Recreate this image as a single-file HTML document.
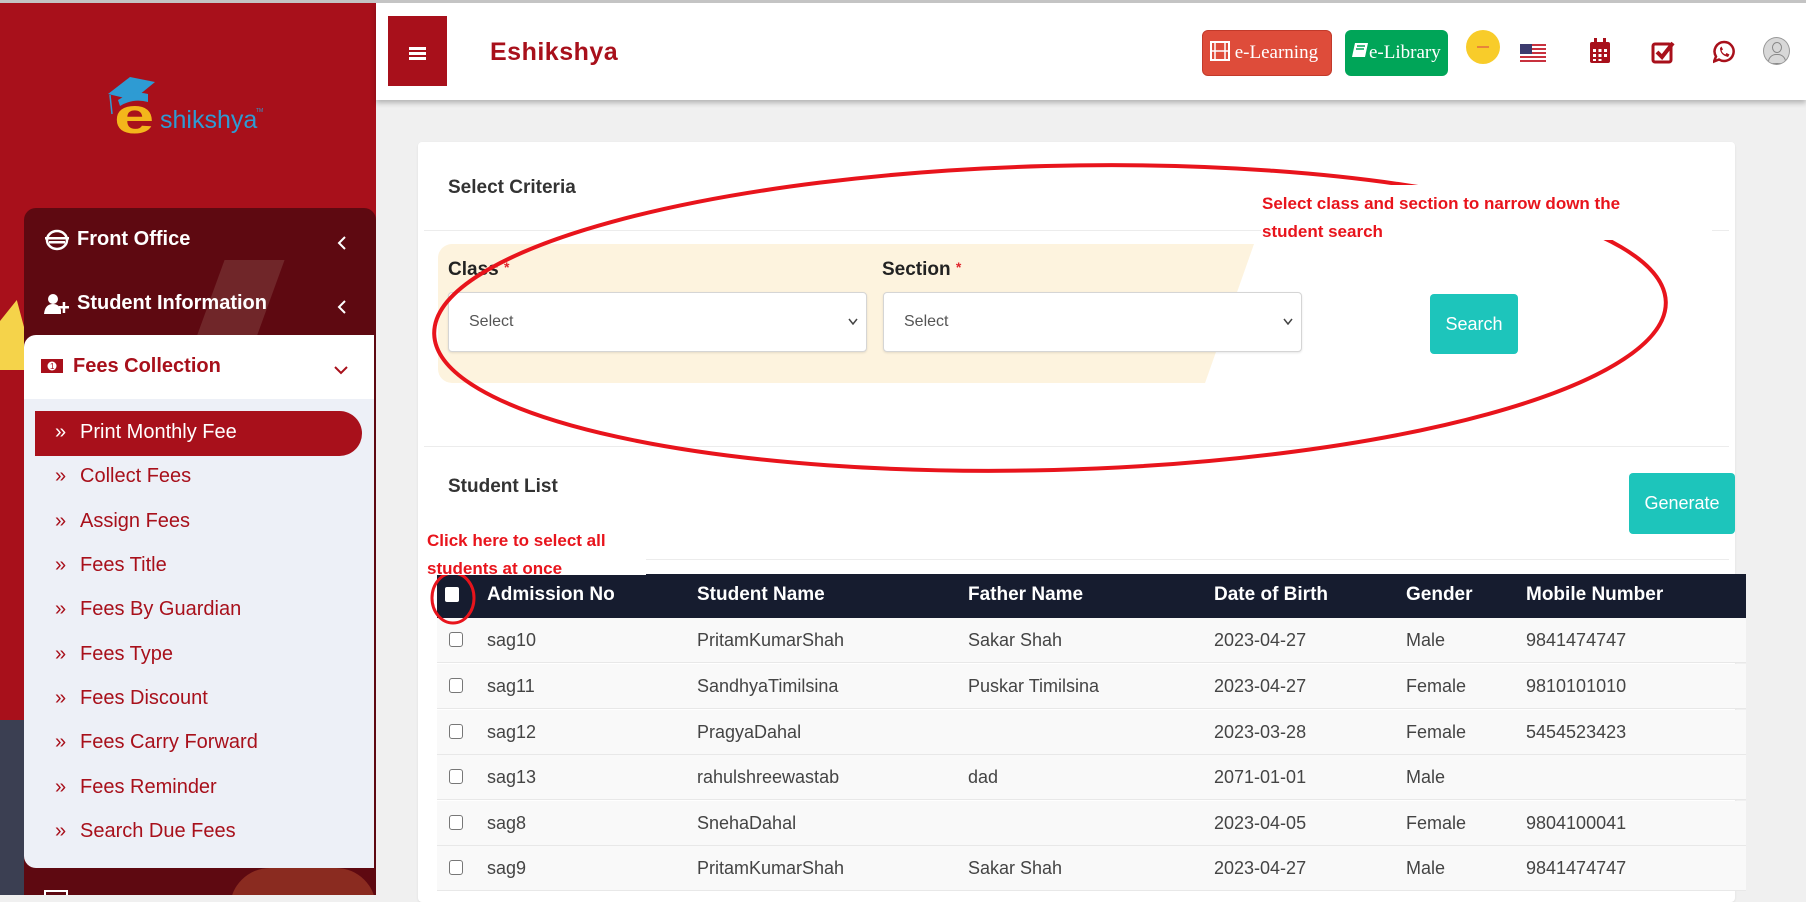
<!DOCTYPE html>
<html><head><meta charset="utf-8"><style>
*{margin:0;padding:0;box-sizing:border-box}
body{width:1806px;height:895px;overflow:hidden;background:#f0f0f0;font-family:"Liberation Sans",sans-serif;position:relative}
.a{position:absolute}
.side{left:0;top:0;width:376px;height:895px;background:#a8101b;overflow:hidden}
.mi{color:#fff;font-weight:bold;font-size:20px;white-space:nowrap}
.sub{left:55px;color:#a8101b;font-size:20px;white-space:nowrap}
.sub b{font-weight:normal;display:inline-block;width:25px;font-size:20px}
.th{color:#fff;font-weight:bold;font-size:19px;top:584px;white-space:nowrap}
.row{left:437px;width:1309px;height:45px;background:#f9f9f9;border-bottom:1px solid #e8e8e8}
.row span{position:absolute;top:12px;font-size:18px;color:#444;white-space:nowrap}
.cb{position:absolute;left:12px;top:14px;width:14px;height:15px;border:1.5px solid #777;border-radius:3px;background:#fff}
.sel{height:60px;border:1px solid #d5d5d5;border-radius:4px;background:#fff;box-shadow:0 1px 2px rgba(0,0,0,.1)}
.sel span{position:absolute;left:20px;top:20px;font-size:16px;color:#555}
.sel svg{position:absolute;right:8px;top:25px}
.lbl{font-weight:bold;font-size:19px;color:#222}
.lbl em{color:#e0262d;font-style:normal;font-size:14px;vertical-align:top}
.ann{color:#e8141c;font-weight:bold;font-size:17px;white-space:nowrap}
.chev{position:absolute}
</style></head><body>
<div class="a" style="left:0;top:0;width:1806px;height:3px;background:#c4c4c4;z-index:5"></div>

<!-- Sidebar -->
<div class="a side">
  <div class="a" style="left:0;top:300px;width:28px;height:70px;background:#f5d34a;clip-path:polygon(0 30%,60% 0,100% 60%,100% 100%,0 100%)"></div>
  <div class="a" style="left:0;top:720px;width:30px;height:175px;background:#3b3f52"></div>
  <!-- logo -->
  <svg class="a" style="left:100px;top:72px" width="170" height="70" viewBox="0 0 170 70">
    <polygon points="8,22 30,5 55,10 33,28" fill="#2e9bd3"/>
    <path d="M18,28 q15,-10 30,-6 l0,8 q-15,-4 -28,4z" fill="#2e9bd3"/>
    <line x1="10" y1="23" x2="12" y2="42" stroke="#2e9bd3" stroke-width="1.5"/>
    <text x="0" y="0" font-family="Liberation Sans" font-weight="bold" font-size="50" fill="#f3b61b" transform="translate(14 61) scale(1.45 1)">e</text>
    <text x="60" y="56" font-family="Liberation Sans" font-size="25" fill="#2e9bd3">shikshya</text>
    <text x="156" y="40" font-size="5" fill="#2e9bd3">TM</text>
  </svg>
  <!-- menu -->
  <div class="a" style="left:24px;top:208px;width:352px;height:700px;background:#5e0911;border-radius:12px 12px 0 0"></div>
  <div class="a" style="left:210px;top:260px;width:60px;height:80px;background:#7d3a3a;opacity:.6;transform:skewX(-20deg)"></div>
  <svg class="a" style="left:44px;top:228px" width="26" height="24" viewBox="0 0 26 24"><ellipse cx="13" cy="12" rx="10" ry="9" fill="none" stroke="#fff" stroke-width="2.5"/><rect x="1" y="9" width="24" height="2.5" fill="#fff"/><rect x="5" y="13" width="16" height="2.5" fill="#fff"/></svg>
  <div class="a mi" style="left:77px;top:228px">Front Office</div>
  <svg class="chev" style="left:337px;top:236px" width="10" height="14" viewBox="0 0 10 14"><path d="M8,1 L2,7 L8,13" fill="none" stroke="#fff" stroke-width="2"/></svg>
  <svg class="a" style="left:44px;top:292px" width="26" height="24" viewBox="0 0 26 24"><circle cx="9" cy="7" r="5" fill="#fff"/><path d="M0,22 q1,-10 9,-10 q6,0 8,6 l0,4z" fill="#fff"/><rect x="15" y="14" width="10" height="2.5" fill="#fff"/><rect x="18.7" y="10" width="2.5" height="11" fill="#fff"/></svg>
  <div class="a mi" style="left:77px;top:292px">Student Information</div>
  <svg class="chev" style="left:337px;top:300px" width="10" height="14" viewBox="0 0 10 14"><path d="M8,1 L2,7 L8,13" fill="none" stroke="#fff" stroke-width="2"/></svg>
  <div class="a" style="left:24px;top:335px;width:350px;height:64px;background:#fff;border-radius:12px 0 0 0"></div>
  <svg class="a" style="left:40px;top:357px" width="24" height="18" viewBox="0 0 24 18"><rect x="1" y="2" width="22" height="14" fill="#a8101b"/><circle cx="12" cy="9" r="4.5" fill="#fff"/><text x="10" y="12" font-size="8" fill="#a8101b">1</text></svg>
  <div class="a mi" style="left:73px;top:355px;color:#a8101b">Fees Collection</div>
  <svg class="chev" style="left:334px;top:366px" width="14" height="9" viewBox="0 0 14 9"><path d="M1,1 L7,7 L13,1" fill="none" stroke="#a8101b" stroke-width="2"/></svg>
  <div class="a" style="left:24px;top:399px;width:350px;height:469px;background:#edf0f7;border-radius:0 0 0 12px"></div>
  <div class="a" style="left:35px;top:411px;width:327px;height:45px;background:#a8101b;border-radius:0 23px 23px 0"></div>
  <div class="a sub" style="top:421px;color:#fff"><b>»</b>Print Monthly Fee</div>
  <div class="a sub" style="top:465px"><b>»</b>Collect Fees</div>
  <div class="a sub" style="top:510px"><b>»</b>Assign Fees</div>
  <div class="a sub" style="top:554px"><b>»</b>Fees Title</div>
  <div class="a sub" style="top:598px"><b>»</b>Fees By Guardian</div>
  <div class="a sub" style="top:643px"><b>»</b>Fees Type</div>
  <div class="a sub" style="top:687px"><b>»</b>Fees Discount</div>
  <div class="a sub" style="top:731px"><b>»</b>Fees Carry Forward</div>
  <div class="a sub" style="top:776px"><b>»</b>Fees Reminder</div>
  <div class="a sub" style="top:820px"><b>»</b>Search Due Fees</div>
  <div class="a" style="left:230px;top:868px;width:146px;height:40px;background:#8a2b20;border-radius:40px 40px 0 0"></div>
  <div class="a" style="left:44px;top:890px;width:24px;height:5px;border:2px solid #fff;border-bottom:none"></div>
</div>

<!-- Header -->
<div class="a" style="left:376px;top:3px;width:1430px;height:97px;background:#fff;box-shadow:0 3px 5px rgba(0,0,0,.25)"></div>
<div class="a" style="left:388px;top:16px;width:59px;height:70px;background:#a8101b"></div>
<div class="a" style="left:409px;top:47px;width:17px;height:3px;background:#fff;box-shadow:0 5px 0 #fff,0 10px 0 #fff"></div>
<div class="a" style="left:490px;top:38px;font-size:25px;font-weight:bold;color:#a8101b;letter-spacing:.5px">Eshikshya</div>
<div class="a" style="left:1202px;top:30px;width:130px;height:46px;background:#de4c3a;border:1px solid #c23a2a;border-radius:6px;color:#fff;font-family:'Liberation Serif',serif;font-size:19px;line-height:44px;padding-left:7px">
<svg width="20" height="20" viewBox="0 0 20 20" style="vertical-align:-3px"><rect x="1" y="1" width="18" height="18" fill="none" stroke="#fff" stroke-width="2"/><line x1="5" y1="1" x2="5" y2="19" stroke="#fff" stroke-width="1.5"/><line x1="15" y1="1" x2="15" y2="19" stroke="#fff" stroke-width="1.5"/><line x1="1" y1="10" x2="19" y2="10" stroke="#fff" stroke-width="1.5"/></svg> e-Learning</div>
<div class="a" style="left:1345px;top:30px;width:103px;height:46px;background:#00a558;border-radius:6px;color:#fff;font-family:'Liberation Serif',serif;font-size:19px;line-height:46px;padding-left:6px">
<svg width="18" height="18" viewBox="0 0 18 18" style="vertical-align:-2px"><path d="M4,1 h13 l-3,14 h-13z" fill="#fff"/><path d="M6,4 h8 M5,7 h8" stroke="#00a558" stroke-width="1.5"/></svg>e-Library</div>
<div class="a" style="left:1468px;top:32px;width:30px;height:30px;border-radius:50%;background:#f8cc2a;box-shadow:0 0 0 2px #f8cc2a"></div>
<div class="a" style="left:1477px;top:46px;width:12px;height:2px;background:#e8843a"></div>
<svg class="a" style="left:1520px;top:44px" width="26" height="18" viewBox="0 0 26 18"><rect width="26" height="18" fill="#fff"/><g fill="#c8313e"><rect y="0" width="26" height="2"/><rect y="4" width="26" height="2"/><rect y="8" width="26" height="2"/><rect y="12" width="26" height="2"/><rect y="16" width="26" height="2"/></g><rect width="12" height="10" fill="#3c3b6e"/></svg>
<svg class="a" style="left:1589px;top:38px" width="22" height="26" viewBox="0 0 22 26"><rect x="1" y="4" width="20" height="21" rx="2" fill="#a8101b"/><rect x="5" y="0" width="3" height="7" fill="#a8101b"/><rect x="14" y="0" width="3" height="7" fill="#a8101b"/><g fill="#fff"><rect x="4" y="11" width="3" height="3"/><rect x="9.5" y="11" width="3" height="3"/><rect x="15" y="11" width="3" height="3"/><rect x="4" y="16" width="3" height="3"/><rect x="9.5" y="16" width="3" height="3"/><rect x="15" y="16" width="3" height="3"/><rect x="4" y="21" width="3" height="2"/><rect x="9.5" y="21" width="3" height="2"/></g></svg>
<svg class="a" style="left:1651px;top:40px" width="24" height="24" viewBox="0 0 24 24"><rect x="2" y="4" width="18" height="18" rx="2" fill="none" stroke="#a8101b" stroke-width="3"/><path d="M6,12 l5,5 l11,-14" fill="none" stroke="#a8101b" stroke-width="4"/></svg>
<svg class="a" style="left:1713px;top:40px" width="22" height="24" viewBox="0 0 22 24"><path d="M11,2 a9.5,9.5 0 1 1 -5,17.5 l-5,2 l2,-5 a9.5,9.5 0 0 1 8,-14.5z" fill="none" stroke="#a8101b" stroke-width="2.5"/><path d="M7,8 q0,7 8,9 l1.5,-2.5 l-3,-1.5 l-1,1.5 q-3,-1 -4,-4 l1.5,-1 l-1.5,-3z" fill="#a8101b"/></svg>
<div class="a" style="left:1763px;top:37px;width:27px;height:28px;border-radius:50%;background:#d8d8d8;border:1.5px solid #999;overflow:hidden"><div style="margin:4px auto 0;width:10px;height:11px;border-radius:50%;border:1.5px solid #888"></div><div style="margin:1px auto 0;width:18px;height:10px;border-radius:8px 8px 0 0;border:1.5px solid #888"></div></div>

<!-- Card -->
<div class="a" style="left:418px;top:142px;width:1317px;height:760px;background:#fff;border-radius:4px;box-shadow:0 1px 2px rgba(0,0,0,.08)"></div>
<div class="a lbl" style="left:448px;top:177px;color:#333">Select Criteria</div>
<div class="a" style="left:424px;top:230px;width:1305px;height:1px;background:#ececec"></div>
<div class="a" style="left:438px;top:244px;width:816px;height:139px;background:#fdf3de;border-radius:14px 0 0 14px;clip-path:polygon(0 0,100% 0,94% 100%,0 100%)"></div>
<div class="a lbl" style="left:448px;top:259px">Class <em>*</em></div>
<div class="a lbl" style="left:882px;top:259px">Section <em>*</em></div>
<div class="a sel" style="left:448px;top:292px;width:419px"><span>Select</span><svg width="10" height="7" viewBox="0 0 10 7"><path d="M1,1 L5,6 L9,1" fill="none" stroke="#444" stroke-width="1.5"/></svg></div>
<div class="a sel" style="left:883px;top:292px;width:419px"><span>Select</span><svg width="10" height="7" viewBox="0 0 10 7"><path d="M1,1 L5,6 L9,1" fill="none" stroke="#444" stroke-width="1.5"/></svg></div>
<div class="a" style="left:1430px;top:294px;width:88px;height:60px;background:#1dc5bb;border-radius:4px;color:#fff;font-size:18px;text-align:center;line-height:60px">Search</div>
<div class="a" style="left:424px;top:446px;width:1305px;height:1px;background:#ececec"></div>
<div class="a lbl" style="left:448px;top:476px;color:#333">Student List</div>
<div class="a" style="left:1629px;top:473px;width:106px;height:61px;background:#1dc5bb;border-radius:4px;color:#fff;font-size:18px;text-align:center;line-height:61px">Generate</div>
<div class="a" style="left:424px;top:559px;width:1305px;height:1px;background:#ececec"></div>

<!-- Table -->
<div class="a" style="left:437px;top:574px;width:1309px;height:44px;background:#161c2f"></div>
<div class="a" style="left:445px;top:587px;width:14px;height:15px;background:#fff;border-radius:2px"></div>
<div class="a th" style="left:487px">Admission No</div>
<div class="a th" style="left:697px">Student Name</div>
<div class="a th" style="left:968px">Father Name</div>
<div class="a th" style="left:1214px">Date of Birth</div>
<div class="a th" style="left:1406px">Gender</div>
<div class="a th" style="left:1526px">Mobile Number</div>

<div class="a row" style="top:618px"><i class="cb"></i><span style="left:50px">sag10</span><span style="left:260px">PritamKumarShah</span><span style="left:531px">Sakar Shah</span><span style="left:777px">2023-04-27</span><span style="left:969px">Male</span><span style="left:1089px">9841474747</span></div>
<div class="a row" style="top:664px"><i class="cb"></i><span style="left:50px">sag11</span><span style="left:260px">SandhyaTimilsina</span><span style="left:531px">Puskar Timilsina</span><span style="left:777px">2023-04-27</span><span style="left:969px">Female</span><span style="left:1089px">9810101010</span></div>
<div class="a row" style="top:710px"><i class="cb"></i><span style="left:50px">sag12</span><span style="left:260px">PragyaDahal</span><span style="left:777px">2023-03-28</span><span style="left:969px">Female</span><span style="left:1089px">5454523423</span></div>
<div class="a row" style="top:755px"><i class="cb"></i><span style="left:50px">sag13</span><span style="left:260px">rahulshreewastab</span><span style="left:531px">dad</span><span style="left:777px">2071-01-01</span><span style="left:969px">Male</span></div>
<div class="a row" style="top:801px"><i class="cb"></i><span style="left:50px">sag8</span><span style="left:260px">SnehaDahal</span><span style="left:777px">2023-04-05</span><span style="left:969px">Female</span><span style="left:1089px">9804100041</span></div>
<div class="a row" style="top:846px"><i class="cb"></i><span style="left:50px">sag9</span><span style="left:260px">PritamKumarShah</span><span style="left:531px">Sakar Shah</span><span style="left:777px">2023-04-27</span><span style="left:969px">Male</span><span style="left:1089px">9841474747</span></div>

<!-- Annotations -->
<svg class="a" style="left:0;top:0" width="1806" height="895">
  <ellipse cx="1050" cy="318" rx="616" ry="152" fill="none" stroke="#e8141c" stroke-width="4" transform="rotate(-1.5 1050 318)"/>
  <ellipse cx="453" cy="598" rx="21" ry="25" fill="none" stroke="#e8141c" stroke-width="3"/>
</svg>
<div class="a" style="left:1261px;top:185px;width:451px;height:55px;background:#fff"></div>
<div class="a ann" style="left:1262px;top:190px;line-height:28px">Select class and section to narrow down the<br>student search</div>
<div class="a" style="left:424px;top:525px;width:222px;height:50px;background:#fff"></div>
<div class="a ann" style="left:427px;top:527px;line-height:28px">Click here to select all<br>students at once</div>
</body></html>
